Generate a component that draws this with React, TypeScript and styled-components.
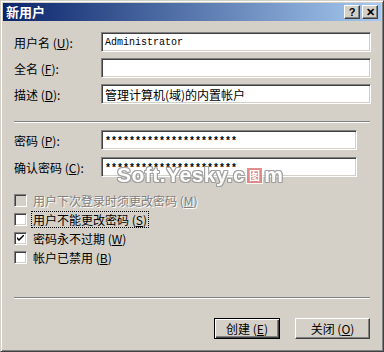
import React from 'react'
import styled, { createGlobalStyle } from 'styled-components'

const GlobalStyle = createGlobalStyle`
	body {
		margin: 0;
		background: #d4d0c8;
		font-family: "Noto Sans CJK SC", "Liberation Sans", sans-serif;
		font-size: 12px;
	}
`

const Window = styled.div`
	position: relative;
	box-sizing: border-box;
	width: 384px;
	height: 352px;
	background: #d4d0c8;
	border: 1px solid;
	border-color: #d4d0c8 #404040 #404040 #d4d0c8;
	box-shadow: inset 1px 1px #fff, inset -1px -1px #808080;
	padding: 2px;
	display: flex;
	flex-direction: column;
`

const TitleBar = styled.div`
	height: 18px;
	display: flex;
	align-items: center;
	padding: 0 3px 0 3px;
	background: linear-gradient(to right, #0a246a, #a6caf0);
`

const Title = styled.div`
	flex: 1;
	color: #fff;
	font-weight: bold;
	font-size: 13px;
	line-height: 18px;
`

const TitleButton = styled.div`
	box-sizing: border-box;
	width: 16px;
	height: 14px;
	margin-left: 2px;
	background: #d4d0c8;
	border: 1px solid;
	border-color: #fff #404040 #404040 #fff;
	box-shadow: inset -1px -1px #808080;
	display: flex;
	align-items: center;
	justify-content: center;
	font-family: "Liberation Sans", sans-serif;
	font-weight: bold;
	font-size: 11px;
	line-height: 1;
	color: #000;
`

const Body = styled.div`
	flex: 1;
	display: flex;
	flex-direction: column;
	padding: 11px 10px 0 11px;
`

const Row = styled.div<{ $gap?: number }>`
	display: flex;
	align-items: center;
	height: 20px;
	margin-top: ${p => p.$gap ?? 0}px;
`

const Label = styled.label`
	width: 87px;
	flex: none;
	color: #000;
	white-space: nowrap;
`

const Input = styled.div<{ $width?: number; $mono?: boolean }>`
	box-sizing: border-box;
	width: ${p => (p.$width ? `${p.$width}px` : '270px')};
	height: 20px;
	background: #fff;
	border: 1px solid;
	border-color: #808080 #fff #fff #808080;
	box-shadow: inset 1px 1px #404040, inset -1px -1px #d4d0c8;
	padding: 0 3px;
	display: flex;
	align-items: center;
	white-space: nowrap;
	overflow: hidden;
	font-family: ${p =>
		p.$mono ? '"Liberation Mono", monospace' : '"Noto Sans CJK SC", sans-serif'};
	font-size: ${p => (p.$mono ? '10px' : '12px')};
`

const Secret = styled(Input)`
	font-weight: bold;
	font-size: 10px;
	padding-top: 3px;
`

const Separator = styled.div<{ $top: number; $bottom: number }>`
	height: 1px;
	width: 356px;
	margin-top: ${p => p.$top}px;
	margin-bottom: ${p => p.$bottom}px;
	background: #808080;
	border-bottom: 1px solid #fff;
`

const CheckList = styled.div`
	display: flex;
	flex-direction: column;
	margin-top: 14px;
`

const CheckRow = styled.div<{ $disabled?: boolean }>`
	display: flex;
	align-items: center;
	height: 19px;
	color: ${p => (p.$disabled ? '#808080' : '#000')};
	text-shadow: ${p => (p.$disabled ? '1px 1px #fff' : 'none')};
`

const Box = styled.span<{ $disabled?: boolean }>`
	box-sizing: border-box;
	width: 13px;
	height: 13px;
	margin-right: 5px;
	flex: none;
	background: ${p => (p.$disabled ? '#d4d0c8' : '#fff')};
	border: 1px solid;
	border-color: #808080 #fff #fff #808080;
	box-shadow: inset 1px 1px #404040, inset -1px -1px #d4d0c8;
	display: flex;
	align-items: center;
	justify-content: center;
`

const CheckText = styled.span<{ $focus?: boolean }>`
	padding: 0 1px;
	outline: ${p => (p.$focus ? '1px dotted #000' : 'none')};
	line-height: 15px;
`

const Footer = styled.div`
	display: flex;
	justify-content: flex-end;
	gap: 15px;
	padding-right: 1px;
`

const Button = styled.div<{ $default?: boolean; $width: number }>`
	box-sizing: border-box;
	width: ${p => p.$width}px;
	height: 21px;
	background: #d4d0c8;
	border: 1px solid;
	border-color: ${p => (p.$default ? '#000' : '#fff #404040 #404040 #fff')};
	box-shadow: ${p =>
		p.$default
			? 'inset 1px 1px #fff, inset -1px -1px #404040, inset -2px -2px #808080'
			: 'inset -1px -1px #808080'};
	display: flex;
	align-items: center;
	justify-content: center;
	color: #000;
`

const Watermark = styled.div`
	position: absolute;
	left: 116px;
	top: 162px;
	font-family: "Liberation Sans", sans-serif;
	font-weight: bold;
	font-size: 21px;
	letter-spacing: 0.5px;
	color: #fff;
	text-shadow: 1px 0 #9a9a9a, -1px 0 #9a9a9a, 0 1px #9a9a9a, 0 -1px #9a9a9a,
		1px 1px #9a9a9a, -1px -1px #9a9a9a, 1px -1px #9a9a9a, -1px 1px #9a9a9a;
	opacity: 0.9;
	pointer-events: none;
`

const Stamp = styled.span`
	display: inline-block;
	width: 15px;
	height: 15px;
	margin: 0 1px;
	background: #e08080;
	border: 1px solid #fff;
	color: #fff;
	font-family: "Noto Sans CJK SC", sans-serif;
	font-size: 11px;
	line-height: 15px;
	text-align: center;
	text-shadow: none;
	vertical-align: 2px;
`

const Check = () => (
	<svg width="7" height="7" viewBox="0 0 7 7">
		<path d="M0 2 L0 4 L2 6 L7 1 L7 -1 L2 4 Z" fill="#000" />
	</svg>
)

const checks = [
	{ text: '用户下次登录时须更改密码', key: 'M', disabled: true },
	{ text: '用户不能更改密码', key: 'S', focus: true },
	{ text: '密码永不过期', key: 'W', checked: true },
	{ text: '帐户已禁用', key: 'B' },
]

export default function App() {
	return (
		<Window>
			<GlobalStyle />
			<TitleBar>
				<Title>新用户</Title>
				<TitleButton>?</TitleButton>
				<TitleButton>✕</TitleButton>
			</TitleBar>
			<Body>
				<Row>
					<Label>用户名 (<u>U</u>):</Label>
					<Input $mono>Administrator</Input>
				</Row>
				<Row $gap={6}>
					<Label>全名 (<u>F</u>):</Label>
					<Input />
				</Row>
				<Row $gap={6}>
					<Label>描述 (<u>D</u>):</Label>
					<Input>管理计算机(域)的内置帐户</Input>
				</Row>
				<Separator $top={17} $bottom={7} />
				<Row>
					<Label>密码 (<u>P</u>):</Label>
					<Secret $mono $width={256}>**********************</Secret>
				</Row>
				<Row $gap={7}>
					<Label>确认密码 (<u>C</u>):</Label>
					<Secret $mono $width={256}>**********************</Secret>
				</Row>
				<CheckList>
					{checks.map(c => (
						<CheckRow key={c.key} $disabled={c.disabled}>
							<Box $disabled={c.disabled}>{c.checked && <Check />}</Box>
							<CheckText $focus={c.focus}>
								{c.text} (<u>{c.key}</u>)
							</CheckText>
						</CheckRow>
					))}
				</CheckList>
				<Separator $top={30} $bottom={19} />
				<Footer>
					<Button $default $width={66}>创建 (<u>E</u>)</Button>
					<Button $width={75}>关闭 (<u>O</u>)</Button>
				</Footer>
			</Body>
			<Watermark>
				Soft.Yesky.c<Stamp>图</Stamp>m
			</Watermark>
		</Window>
	)
}
